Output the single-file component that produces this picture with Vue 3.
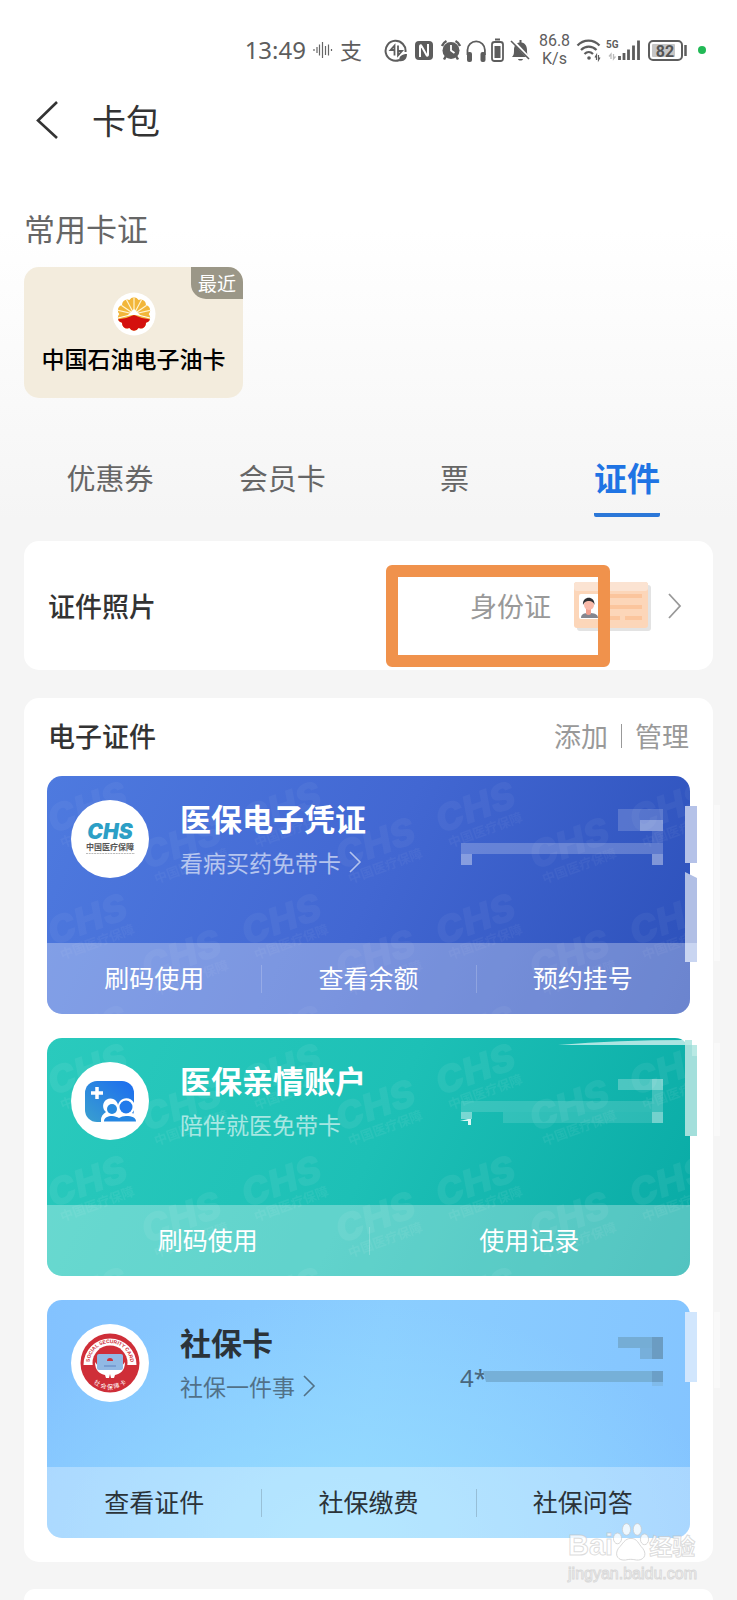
<template>
  <div class="page">
    <!-- Phone status bar -->
    <div class="status">
      <span class="time">13:49</span>
      <svg class="wave" width="24" height="24" viewBox="312 38 24 24">
        <path d="M314 49v2M317 47v6M319.500 44.500v11M322.500 42v16M325.500 46v9M328.500 44.500v11M331.500 49v2" stroke="#666" stroke-width="1.200" />
      </svg>
      <span class="pay">支</span>
      <!-- data transfer -->
      <svg width="25" height="26" viewBox="384 37 25 26" fill="none" stroke="#5d5d5d">
        <path d="M405.500 52a10 10 0 1 0-6 8" stroke-width="2" />
        <path d="M394.500 55.500V45.500l-4 4.500h3.500M398 45.500v10l4-4.500h-3.500" stroke-width="1.800" />
        <path d="M399 61c0-5 3-7 8-7 0 5-3 8-8 7z" fill="#5d5d5d" stroke="none" />
      </svg>
      <!-- nfc -->
      <svg width="23" height="26" viewBox="413 37 23 26">
        <rect x="415" y="41" width="18" height="19" rx="4" fill="#5d5d5d" />
        <path d="M420 57V46.500c0-1.500 1-1.500 1.500-.5l5 9c.5 1 1.500 1 1.500-.5V44" fill="none" stroke="#fff" stroke-width="2" />
      </svg>
      <!-- alarm -->
      <svg width="22" height="26" viewBox="440 37 22 26">
        <circle cx="451" cy="50.500" r="8.500" fill="#5d5d5d" />
        <path d="M442 46a9 9 0 0 1 4.500-5M460 46a9 9 0 0 0-4.500-5M446 56l-2 3.500M456 56l2 3.500" fill="none" stroke="#5d5d5d" stroke-width="2.500" />
        <path d="M451 45v5.500l3.500 2.500" fill="none" stroke="#fff" stroke-width="1.800" />
      </svg>
      <!-- headphones -->
      <svg width="20" height="26" viewBox="466 37 20 26">
        <path d="M467.500 55v-5a8.700 8.700 0 0 1 17.400 0v5" fill="none" stroke="#5d5d5d" stroke-width="1.800" />
        <rect x="467" y="52" width="5" height="10" rx="2" fill="#5d5d5d" />
        <rect x="480.500" y="52" width="5" height="10" rx="2" fill="#5d5d5d" />
      </svg>
      <svg width="14" height="26" viewBox="490 37 14 26">
        <rect x="492" y="42" width="11" height="19" rx="2.500" fill="none" stroke="#5d5d5d" stroke-width="1.800" />
        <path d="M495 39.500h5" stroke="#5d5d5d" stroke-width="2" />
        <rect x="494.500" y="46" width="6" height="12" fill="#5d5d5d" />
      </svg>
      <!-- muted bell -->
      <svg width="25" height="26" viewBox="508 37 25 26">
        <path d="M512 57c2-2 2-4 2-7 0-4 2-7 5.500-7.500V40h2v2.500c3.500.5 5.500 3.500 5.500 7.500 0 3 0 5 2 7zM518 59h5c-.5 2-4.500 2-5 0z" fill="#5d5d5d" />
        <path d="M512 40l18 19" stroke="#fff" stroke-width="3" />
        <path d="M511 41l18 18" stroke="#5d5d5d" stroke-width="1.600" />
      </svg>
      <span class="speed">86.8<br />K/s</span>
      <!-- wifi -->
      <svg width="26" height="26" viewBox="576 37 26 26" fill="none" stroke="#5d5d5d" stroke-width="2.200">
        <path d="M577.500 45.500c6-6.500 16-6.500 22 0M581 50c4.500-4.500 11-4.500 15.500 0M584.500 54c2.500-2.500 6-2.500 8.500 0" />
        <circle cx="589" cy="58" r="1.800" fill="#5d5d5d" stroke="none" />
        <path d="M596.500 60v-5l-1.500 2.500M598.500 55v5l1.500-2.500" stroke-width="1.200" />
      </svg>
      <svg width="36" height="26" viewBox="606 37 36 26">
        <text x="606" y="48" class="net">5G</text>
        <path d="M611 59v-5l-2 2.500M613.500 54v5l2-2.500" fill="none" stroke="#bbb" stroke-width="1.300" />
        <path d="M619.500 60v-4M624 60v-7M628.500 60V49.500M633.500 60V45.500M638.500 60V40.500" stroke="#5d5d5d" stroke-width="2.800" />
      </svg>
      <svg width="48" height="26" viewBox="646 37 48 26">
        <rect x="649" y="41" width="33" height="19" rx="4" fill="none" stroke="#5d5d5d" stroke-width="2" />
        <rect x="652" y="44" width="23" height="13" rx="1" fill="#c6c6c6" />
        <path d="M685.500 45v11" stroke="#5d5d5d" stroke-width="2.500" />
        <text x="665" y="56.500" text-anchor="middle" class="level">82</text>
      </svg>
      <i class="dot"></i>
    </div>

    <header class="nav">
      <button class="back" aria-label="返回">
        <svg width="24" height="40" viewBox="0 0 24 40"><path d="M23 2L4 20.500 23 38" fill="none" stroke="#333" stroke-width="2.600" /></svg>
      </button>
      <h1>卡包</h1>
    </header>

    <h2 class="common-title">常用卡证</h2>
    <a href="#" class="oil-card">
      <span class="recent">最近</span>
      <svg width="44" height="44" viewBox="-22 -22 44 44">
        <defs>
          <clipPath id="petals"><circle v-for="p in petals" :key="p.a" :cx="p.x" :cy="p.y" r="5.200" /><circle r="12" /></clipPath>
        </defs>
        <circle r="21.500" fill="#fff" />
        <g clip-path="url(#petals)">
          <rect x="-18" y="-18" width="36" height="36" fill="#f2b63a" />
          <path d="M0 0L-18-4M0 0L-16-11M0 0L-9-17M0 0V-18M0 0L9-17M0 0L16-11M0 0L18-4" stroke="#fff3cf" stroke-width="1.200" />
          <path d="M-6 1L0-5 6 1z" fill="#fff" />
          <path d="M-18 6L-14 5Q-6 4 0 1 6 4 14 5L18 6V18H-18z" fill="#d4100e" />
          <path d="M-18 4.500L0 0 18 4.500" fill="none" stroke="#fff" stroke-width="1" />
        </g>
      </svg>
      <strong>中国石油电子油卡</strong>
    </a>

    <nav class="tabs">
      <button v-for="tab in tabs" :key="tab" :class="{ active: tab === current }" @click="current = tab">
        {{ tab }}
      </button>
    </nav>

    <section class="panel photo">
      <h3>证件照片</h3>
      <a href="#" class="photo-link">
        <span>身份证</span>
        <svg class="id-pic" width="78" height="50" viewBox="0 0 78 50">
          <rect x="4" y="4" width="74" height="46" rx="3" fill="#e3e3e3" />
          <rect x="1" y="1" width="74" height="46" rx="3" fill="#fcd6b9" />
          <rect x="1" y="1" width="74" height="9" rx="3" fill="#fbe3d2" />
          <rect x="6" y="13" width="22" height="25" rx="2" fill="#fff" />
          <path d="M8 37c0-4 3-5 8-5s9 1 9 5z" fill="#85868f" />
          <path d="M13 28h5v5q-2.500 2-5 0z" fill="#f3a08f" />
          <circle cx="16" cy="24" r="5" fill="#f9b9a9" />
          <path d="M10 24c-1-9 12-10 11.500 0-1-3-3-4-5-4s-5 0-6.500 4z" fill="#2f2f33" />
          <path d="M36 15h33M36 26h33M36 37h11M52 37h17" stroke="#fbc59d" stroke-width="4" />
        </svg>
        <svg width="14" height="26" viewBox="0 0 14 26"><path d="M1 1l11 12L1 25" fill="none" stroke="#999" stroke-width="1.800" /></svg>
      </a>
      <i class="marker"></i>
    </section>

    <section class="panel">
      <div class="head">
        <h3>电子证件</h3>
        <div class="tools"><button>添加</button><i></i><button>管理</button></div>
      </div>

      <article v-for="card in cards" :key="card.title" class="card" :class="card.theme">
        <!-- Faint repeated mark behind the two medical cards -->
        <svg v-if="card.theme !== 'sky'" class="marks" width="100%" height="100%" aria-hidden="true">
          <defs>
            <pattern :id="'mark-' + card.theme" width="194" height="112" patternUnits="userSpaceOnUse">
              <g v-for="m in marks" :key="m" :transform="m">
                <text class="mark-big">CHS</text>
                <text y="16" x="4" class="mark-small">中国医疗保障</text>
              </g>
            </pattern>
          </defs>
          <rect width="100%" height="100%" :fill="`url(#mark-${card.theme})`" />
        </svg>

        <div class="main">
          <!-- CHS logo -->
          <svg v-if="card.theme === 'blue'" class="logo" viewBox="71 800 78 78">
            <circle cx="110" cy="839" r="39" fill="#fff" />
            <text x="110" y="839" text-anchor="middle" class="chs">CHS</text>
            <text x="110" y="850" text-anchor="middle" class="chs-cn">中国医疗保障</text>
            <path d="M86 853.500h49" stroke="#aaa" stroke-width=".8" stroke-dasharray="2 .7" />
          </svg>
          <!-- Family account logo -->
          <svg v-else-if="card.theme === 'green'" class="logo" viewBox="71 1062 78 78">
            <defs>
              <linearGradient id="family" x1="0" y1="1" x2="1" y2="0"><stop stop-color="#3aa0cf" /><stop offset="1" stop-color="#1c6cf0" /></linearGradient>
            </defs>
            <circle cx="110" cy="1101" r="39" fill="#fff" />
            <rect x="85" y="1081" width="49" height="41" rx="12" fill="url(#family)" />
            <path d="M97 1087v12M91 1093h12" stroke="#fff" stroke-width="3.500" />
            <path d="M101 1124v-4q0-5 5-8a7.500 7.500 0 1 1 12-7 8.500 8.500 0 1 1 14 8q6 2 6 8v3z" fill="#fff" />
            <circle cx="112" cy="1109" r="5" fill="#2789de" />
            <circle cx="126" cy="1107" r="6.500" fill="#207aeb" />
            <path d="M104 1121.500c0-4 4-5.500 8-5.500 3 0 5 1 7 2q3-2 7-2c6 0 10 1.500 10 5.500z" fill="#2486e2" />
          </svg>
          <!-- Social security logo -->
          <svg v-else class="logo" viewBox="-39 -39 78 78">
            <defs>
              <path id="arc-top" d="M-20 5A20.500 20.500 0 1 1 20 5" />
              <path id="arc-bottom" d="M-26 0A26 26 0 0 0 26 0" />
            </defs>
            <circle r="39" fill="#fff" />
            <circle r="29.500" fill="#cf2e38" />
            <path d="M-26.500 2A26.500 26.500 0 0 1 26.500 2H17A17 17 0 0 0-17 2z" fill="#fff" />
            <circle r="17.500" fill="#cf2e38" />
            <text class="ring-en"><textPath href="#arc-top" startOffset="50%" text-anchor="middle">SOCIAL SECURITY CARD</textPath></text>
            <text class="ring-cn"><textPath href="#arc-bottom" startOffset="50%" text-anchor="middle">社 会 保 障 卡</textPath></text>
            <path d="M-15-1c0 9 5 12 10 13l1 3h3l1-4 1 4h3l1-3c5-1 10-4 10-13l-6 8H-9z" fill="#fff" />
            <rect x="-13" y="-9" width="26" height="16" rx="2" fill="#91b9e4" />
            <path d="M-3-2a3 3 0 0 1 6 0z" fill="#cf2e38" />
            <path d="M-6 3H6" stroke="#5f83c0" stroke-width="1" />
          </svg>

          <div class="info">
            <h4>{{ card.title }}</h4>
            <a href="#">
              {{ card.desc }}
              <svg v-if="card.arrow" width="14" height="24" viewBox="0 0 14 24"><path d="M1 2l10 10L1 22" fill="none" stroke="currentColor" stroke-width="1.600" /></svg>
            </a>
          </div>
        </div>

        <div class="actions">
          <button v-for="item in card.actions" :key="item">{{ item }}</button>
        </div>

        <!-- Masked card number and owner name -->
        <svg class="mask" width="270" height="238" viewBox="450 0 270 238" aria-hidden="true">
          <text v-if="card.theme === 'sky'" x="460" y="87" class="number">4*</text>
          <path v-for="(b, i) in card.blocks" :key="i" :d="b[0]" :fill="b[1]" />
        </svg>
      </article>
    </section>

    <section class="panel next"></section>

    <!-- Site watermark -->
    <div class="watermark">
      <div class="brand">
        <span>Bai</span>
        <svg width="36" height="42" viewBox="0 0 40 44">
          <g fill="#fff" fill-opacity=".8" stroke="#c8c8c8" stroke-opacity=".8">
            <ellipse cx="5" cy="18" rx="4.500" ry="6" /><ellipse cx="15" cy="8" rx="4.500" ry="6.500" />
            <ellipse cx="27" cy="8" rx="4.500" ry="6.500" /><ellipse cx="35" cy="19" rx="4.500" ry="6" />
            <path d="M20 18c7 0 8 6 13 11 6 8 0 14-7 13-5-1-8-1-12 0C6 43 1 37 6 29c5-5 7-11 14-11z" />
          </g>
          <text x="20" y="38" text-anchor="middle" class="du">du</text>
        </svg>
        <span class="cn">经验</span>
      </div>
      <div class="site">jingyan.baidu.com</div>
    </div>
  </div>
</template>

<script setup>
import { ref } from 'vue'

const tabs = ['优惠券', '会员卡', '票', '证件']
const current = ref('证件')

// Ten petals around the oil company flower
const petals = Array.from({ length: 10 }, (_, i) => {
  const a = (i * 36 + 18) * Math.PI / 180
  return { a, x: Math.cos(a) * 11.5, y: Math.sin(a) * 11.5 }
})

const marks = ['translate(6 58) rotate(-20)', 'translate(100 94) rotate(-20)']

// Blocks are [path, fill] pairs measured from the top of the card
const cards = [
  {
    theme: 'blue',
    title: '医保电子凭证',
    desc: '看病买药免带卡',
    arrow: true,
    actions: ['刷码使用', '查看余额', '预约挂号'],
    blocks: [
      ['M618 33h45v22h-45z', 'rgba(255,255,255,.17)'],
      ['M640 44h23v11h-23z', 'rgba(255,255,255,.28)'],
      ['M652 55h11v12h-11z', 'rgba(255,255,255,.1)'],
      ['M461 67h202v11H461z', 'rgba(255,255,255,.22)'],
      ['M461 78h11v11h-11zM652 78h11v11h-11z', 'rgba(255,255,255,.38)'],
      ['M685 30h12v57h-12z', '#b5c2e8'],
      ['M690 87h7l16 9v40h-16V102l-7-4z', '#fff'],
      ['M685 96l12 6v65h-12z', '#b1bfe5'],
      ['M685 167h12v19h-12z', '#c9d5f1'],
      ['M714 29h6v156h-6z', 'rgba(255,255,255,.4)']
    ]
  },
  {
    theme: 'green',
    title: '医保亲情账户',
    desc: '陪伴就医免带卡',
    actions: ['刷码使用', '使用记录'],
    blocks: [
      ['M618 41h34v11h-34z', 'rgba(255,255,255,.25)'],
      ['M652 41h11v11h-11z', 'rgba(255,255,255,.42)'],
      ['M652 52h11v22h-11z', 'rgba(255,255,255,.2)'],
      ['M461 63h191v11H461z', 'rgba(255,255,255,.14)'],
      ['M503 74h149v11H503z', 'rgba(255,255,255,.12)'],
      ['M461 74h11v7h-11zM652 74h11v11h-11z', 'rgba(255,255,255,.42)'],
      ['M460 83l8-2h3v6h-3v-4z', '#ddf7f4'],
      ['M558 7q60-5 127-5v5z', 'rgba(255,255,255,.65)'],
      ['M685 0h12v7h-12z', '#fff'],
      ['M685 7h12v91h-12z', '#a3dfdb'],
      ['M685 2h7v16h5V7h-12z', '#b9e9e4'],
      ['M714 5h6v93h-6z', 'rgba(255,255,255,.4)']
    ]
  },
  {
    theme: 'sky',
    title: '社保卡',
    desc: '社保一件事',
    arrow: true,
    actions: ['查看证件', '社保缴费', '社保问答'],
    blocks: [
      ['M618 37h34v11h-34z', '#75add5'],
      ['M652 37h11v22h-11z', '#6b9cc2'],
      ['M640 48h12v11h-12z', '#77afda'],
      ['M483 71h169v11H486z', '#76b0d8'],
      ['M652 71h11v11h-11z', '#6b9fc7'],
      ['M652 82h11v4h-11z', '#80bbeb'],
      ['M685 12h12v70h-12z', '#d1e6fd'],
      ['M714 12h6v76h-6z', 'rgba(255,255,255,.4)']
    ]
  }
]
</script>

<style>
body {
  margin: 0;
  background: #f5f5f5;
}
</style>

<style scoped>
.page {
  position: relative;
  box-sizing: border-box;
  min-height: 100vh;
  padding: 34px 24px 0;
  display: flex;
  flex-direction: column;
  overflow: hidden;
  background: linear-gradient(#fff 230px, #f5f5f5 520px);
  font-family: 'Noto Sans CJK SC', sans-serif;
  color: #333;
}

h1,
h2,
h3,
h4 {
  margin: 0;
}

button {
  padding: 0;
  border: none;
  background: none;
  font: inherit;
  color: inherit;
  cursor: pointer;
}

a {
  color: inherit;
  text-decoration: none;
}

svg {
  display: block;
  flex: none;
}

.status {
  display: flex;
  align-items: center;
  justify-content: flex-end;
  gap: 4px;
  height: 32px;
  padding-right: 7px;
  color: #5d5d5d;
}

.time {
  margin-right: 2px;
  font: 24px/32px 'Noto Sans', sans-serif;
}

.pay {
  padding-bottom: 3px;
  font-size: 22px;
  line-height: 28px;
  margin-right: 18px;
}

.speed {
  width: 35px;
  text-align: center;
  font: 16px/18px Roboto, sans-serif;
}

.net {
  font: bold 10px Roboto, sans-serif;
  fill: #5d5d5d;
}

.level {
  font: bold 16px Roboto, sans-serif;
  fill: #555;
}

.dot {
  width: 8px;
  height: 8px;
  border-radius: 50%;
  background: #22b956;
}

.nav {
  display: flex;
  align-items: center;
  gap: 34px;
  height: 72px;
  margin-top: 18px;
  padding-left: 10px;
}

.nav h1 {
  font-size: 34px;
  line-height: 48px;
  font-weight: 400;
}

.common-title {
  margin-top: 52px;
  font-size: 31px;
  line-height: 40px;
  font-weight: 400;
  color: #666;
}

.oil-card {
  position: relative;
  display: flex;
  flex-direction: column;
  align-items: center;
  box-sizing: border-box;
  width: 219px;
  height: 131px;
  margin-top: 19px;
  padding-top: 25px;
  border-radius: 15px;
  background: #f3ecdd;
  color: #000;
}

.oil-card strong {
  margin-top: 4px;
  font-size: 23px;
  line-height: 36px;
  font-weight: 500;
  white-space: nowrap;
}

.recent {
  position: absolute;
  top: 0;
  right: 0;
  width: 52px;
  font-size: 19px;
  line-height: 32px;
  text-align: center;
  color: #fff;
  background: #9b9787;
  border-radius: 0 15px 0 15px;
}

.tabs {
  display: grid;
  grid-template-columns: repeat(4, 1fr);
  margin-top: 53px;
}

.tabs button {
  justify-self: center;
  height: 66px;
  padding-bottom: 10px;
  border-bottom: 4px solid transparent;
  font-size: 29px;
  line-height: 52px;
  color: #666;
}

.tabs .active {
  border-radius: 2px;
  border-bottom-color: #2b77d8;
  font-size: 33px;
  font-weight: 700;
  color: #1f74e4;
}

.panel {
  position: relative;
  margin-top: 28px;
  padding: 0 23px 24px;
  border-radius: 15px;
  background: #fff;
}

.panel h3 {
  font-size: 27px;
  line-height: 40px;
  font-weight: 500;
}

.photo {
  display: flex;
  align-items: center;
  justify-content: space-between;
  height: 129px;
  margin-top: 24px;
  padding: 0 31px 0 24px;
}

.photo-link {
  display: flex;
  align-items: center;
  gap: 17px;
  font-size: 27px;
  line-height: 40px;
  color: #999;
}

.id-pic {
  margin-left: 5px;
}

/* Orange frame around the ID entry */
.marker {
  position: absolute;
  top: 24px;
  right: 103px;
  box-sizing: border-box;
  width: 224px;
  height: 102px;
  border: 12px solid #f0924c;
  border-radius: 6px;
  pointer-events: none;
}

.head {
  display: flex;
  align-items: center;
  justify-content: space-between;
  height: 75px;
  padding: 0 1px 3px;
}

.tools {
  display: flex;
  align-items: center;
  gap: 13px;
  font-size: 27px;
  line-height: 40px;
  color: #999;
}

.tools i {
  width: 1px;
  height: 24px;
  background: #999;
}

.card {
  position: relative;
  border-radius: 15px;
  color: #fff;
}

.card + .card {
  margin-top: 24px;
}

.blue {
  background: linear-gradient(115deg, #4e7adf, #4267d2 50%, #2c50ba);
}

.green {
  background: linear-gradient(115deg, #2acabd, #1dc0b6 50%, #08aaa5);
}

.sky {
  background: radial-gradient(ellipse 60% 100% at 45% 100%, #96ddff, rgba(150, 221, 255, 0)), linear-gradient(100deg, #83c2ff, #8bceff 50%, #84c4ff);
  color: #2b3339;
}

.marks {
  position: absolute;
  inset: 0;
  border-radius: 15px;
  opacity: 0.04;
}

.green .marks {
  opacity: 0.06;
}

.mark-big {
  font: italic 900 38px Inter, sans-serif;
  fill: #fff;
}

.mark-small {
  font: bold 13px 'Noto Sans CJK SC', sans-serif;
  fill: #fff;
}

.main {
  position: relative;
  display: flex;
  gap: 31px;
  box-sizing: border-box;
  height: 167px;
  padding: 20px 24px 0;
}

.logo {
  width: 78px;
  height: 78px;
  margin-top: 4px;
}

.chs {
  font: italic 900 21px Inter, sans-serif;
  fill: #2c9fc6;
}

.chs-cn {
  font: bold 8px 'Noto Sans CJK SC', sans-serif;
  fill: #555;
}

.ring-en {
  font: bold 5px 'Liberation Sans', sans-serif;
  fill: #cf2e38;
}

.ring-cn {
  font: 6px 'Noto Sans CJK SC', sans-serif;
  fill: #fff;
}

.info h4 {
  font-size: 31px;
  line-height: 44px;
  font-weight: 700;
}

.info a {
  display: flex;
  align-items: center;
  gap: 8px;
  font-size: 23px;
  line-height: 44px;
  opacity: 0.6;
}

.actions {
  position: relative;
  display: flex;
  height: 71px;
  border-radius: 0 0 15px 15px;
  background: rgba(255, 255, 255, 0.3);
}

.actions button {
  position: relative;
  flex: 1;
  padding-bottom: 4px;
  font-size: 25px;
  line-height: 40px;
}

.actions button + button::before {
  content: '';
  position: absolute;
  left: 0;
  top: 22px;
  width: 1px;
  height: 28px;
  background: currentColor;
  opacity: 0.2;
}

.mask {
  position: absolute;
  top: 0;
  right: -30px;
  pointer-events: none;
}

.number {
  font: 24px 'Noto Sans', sans-serif;
  fill: #49667c;
}

.next {
  flex: 1;
  margin-top: 27px;
  padding: 0;
  min-height: 11px;
  border-radius: 15px 15px 0 0;
}

.watermark {
  position: absolute;
  right: 40px;
  bottom: 15px;
  font-family: 'Liberation Sans', sans-serif;
  color: rgba(255, 255, 255, 0.8);
  -webkit-text-stroke: 1px rgba(185, 185, 185, 0.5);
}

.brand {
  display: flex;
  align-items: flex-end;
  font-size: 29px;
  line-height: 36px;
  font-weight: 700;
}

.brand .cn {
  font-family: 'Noto Sans CJK SC', sans-serif;
  font-size: 23px;
}

.du {
  font: bold 19px 'Liberation Sans', sans-serif;
  fill: #fff;
}

.site {
  font-size: 16px;
  line-height: 22px;
}
</style>
